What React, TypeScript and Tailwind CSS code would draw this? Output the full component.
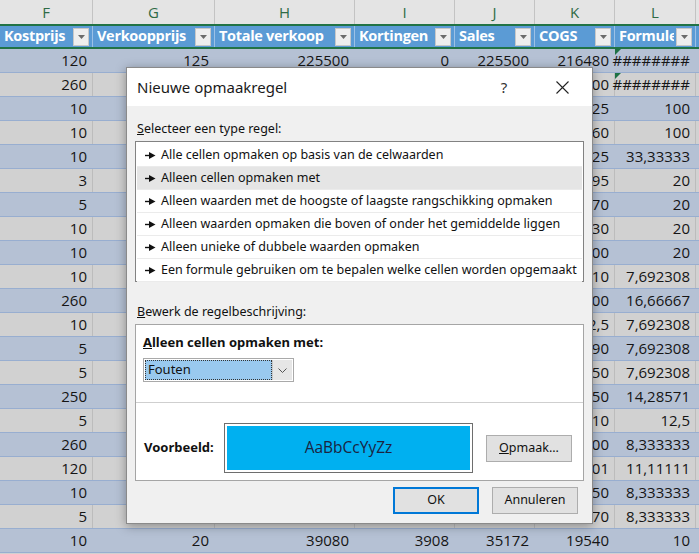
import React from "react";

const COLS = [
	{ letter: "F", title: "Kostprijs", w: 93 },
	{ letter: "G", title: "Verkoopprijs", w: 122 },
	{ letter: "H", title: "Totale verkoop", w: 140 },
	{ letter: "I", title: "Kortingen", w: 100 },
	{ letter: "J", title: "Sales", w: 80 },
	{ letter: "K", title: "COGS", w: 80 },
	{ letter: "L", title: "Formule", w: 81 },
];

// F, G, H, I, J, K, L
const ROWS: string[][] = [
	["120", "125", "225500", "0", "225500", "216480", "########"],
	["260", "1800", "468000", "0", "468000", "449400", "########"],
	["10", "15", "1500", "0", "1500", "1125", "100"],
	["10", "20", "2000", "0", "2000", "1160", "100"],
	["10", "15", "3300", "0", "3300", "7425", "33,33333"],
	["3", "15", "8595", "0", "8595", "8595", "20"],
	["5", "15", "1470", "0", "1470", "1470", "20"],
	["10", "15", "930", "0", "930", "930", "20"],
	["10", "15", "2500", "0", "2500", "2500", "20"],
	["10", "15", "4210", "0", "4210", "4210", "7,692308"],
	["260", "350", "98800", "0", "98800", "98800", "16,66667"],
	["10", "15", "1402,5", "0", "1402,5", "1402,5", "7,692308"],
	["5", "15", "3690", "0", "3690", "3690", "7,692308"],
	["5", "15", "1150", "0", "1150", "1150", "7,692308"],
	["250", "300", "71250", "0", "71250", "71250", "14,28571"],
	["5", "15", "510", "0", "510", "510", "12,5"],
	["260", "350", "83200", "0", "83200", "83200", "8,333333"],
	["120", "125", "35101", "0", "35101", "35101", "11,11111"],
	["10", "15", "2750", "0", "2750", "2750", "8,333333"],
	["5", "15", "1470", "0", "1470", "1470", "8,333333"],
	["10", "20", "39080", "3908", "35172", "19540", "10"],
];

const RULE_TYPES = [
	"Alle cellen opmaken op basis van de celwaarden",
	"Alleen cellen opmaken met",
	"Alleen waarden met de hoogste of laagste rangschikking opmaken",
	"Alleen waarden opmaken die boven of onder het gemiddelde liggen",
	"Alleen unieke of dubbele waarden opmaken",
	"Een formule gebruiken om te bepalen welke cellen worden opgemaakt",
];

const FilterButton: React.FC = () => (
	<div className="w-[16px] h-[18px] shrink-0 bg-[#eeeeee] border border-[#c8c8c8] flex items-center justify-center">
		<svg width="7" height="4" viewBox="0 0 7 4">
			<path d="M0 0 L7 0 L3.5 4 Z" fill="#6b6b6b" />
		</svg>
	</div>
);

const RuleArrow: React.FC = () => (
	<svg width="11" height="7" viewBox="0 0 11 7" className="shrink-0">
		<path d="M0 3.5 H5" stroke="#111" strokeWidth="1.4" />
		<path d="M4 0 L10.5 3.5 L4 7 Z" fill="#111" />
	</svg>
);

const Sheet: React.FC = () => (
	<div className="flex flex-col font-['Open_Sans',sans-serif]">
		{/* column letters */}
		<div className="flex h-[24px] bg-[#e4e4e4]">
			{COLS.map((c) => (
				<div
					key={c.letter}
					style={{ width: c.w }}
					className="shrink-0 border-r border-[#c3c3c3] flex items-center justify-center text-[15px] text-[#2e6b46]"
				>
					{c.letter}
				</div>
			))}
			<div className="flex-1" />
		</div>

		{/* table header row */}
		<div className="flex h-[25px] bg-[#5b9bd5] border-y-2 border-[#217346]">
			{COLS.map((c) => (
				<div
					key={c.title}
					style={{ width: c.w }}
					className="shrink-0 flex items-center pl-[4px] pr-[3px] gap-[2px] border-r border-[#9cc1e6]"
				>
					<div className="flex-1 overflow-hidden whitespace-nowrap text-[14.5px] tracking-[-0.3px] font-bold text-white leading-none">
						{c.title}
					</div>
					<FilterButton />
				</div>
			))}
			<div className="flex-1" />
		</div>

		{/* data rows */}
		{ROWS.map((row, r) => (
			<div
				key={r}
				className={`flex h-[24px] border-b border-[#98aed0] ${r % 2 === 0 ? "bg-[#b5c1d4]" : "bg-[#d1d1d1]"}`}
			>
				{row.map((v, i) => (
					<div
						key={i}
						style={{ width: COLS[i].w }}
						className={`relative shrink-0 flex items-center justify-end pr-[5px] text-[15px] text-[#151515] border-r ${r % 2 === 0 ? "border-[#b5c1d4]" : "border-[#bcbcbc]"}`}
					>
						{i === 6 && r < 2 && (
							<div className="absolute left-0 top-0 w-0 h-0 border-t-[6px] border-r-[6px] border-t-[#1e7145] border-r-transparent" />
						)}
						{v}
					</div>
				))}
				<div className="flex-1" />
			</div>
		))}
	</div>
);

const Dialog: React.FC = () => (
	<div className="absolute left-[126px] top-[67px] w-[467px] h-[457px] flex flex-col bg-[#f0f0f0] border border-[#8a8a8a] shadow-[0_2px_10px_rgba(0,0,0,0.35)] font-['Noto_Sans',sans-serif] text-[12.5px] text-[#111]">
		{/* title bar */}
		<div className="h-[38px] shrink-0 bg-white flex items-center pl-[10px]">
			<div className="flex-1 text-[15px] text-[#1a1a1a]">Nieuwe opmaakregel</div>
			<div className="w-[56px] text-center text-[15px] text-[#333]">?</div>
			<div className="w-[60px] flex justify-center">
				<svg width="13" height="13" viewBox="0 0 13 13">
					<path d="M0.5 0.5 L12.5 12.5 M12.5 0.5 L0.5 12.5" stroke="#222" strokeWidth="1.1" />
				</svg>
			</div>
		</div>

		<div className="flex flex-col px-[8px] pt-[14px]">
			<div className="h-[18px] pl-[2px] leading-[18px]">
				<span className="underline">S</span>electeer een type regel:
			</div>

			{/* rule type list */}
			<div className="mt-[3px] h-[141px] bg-white border border-[#828282] px-[1px] pt-[2px]">
				{RULE_TYPES.map((t, i) => (
					<div
						key={t}
						className={`h-[23px] flex items-center gap-[5px] pl-[8px] whitespace-nowrap border-b border-[#ebebeb] ${i === 1 ? "bg-[#e5e5e5]" : ""}`}
					>
						<RuleArrow />
						<span>{t}</span>
					</div>
				))}
			</div>

			<div className="mt-[21px] h-[18px] pl-[2px] leading-[18px]">
				<span className="underline">B</span>ewerk de regelbeschrijving:
			</div>

			{/* rule description */}
			<div className="mt-[3px] h-[157px] bg-white border border-[#a5a5a5] flex flex-col">
				<div className="flex flex-col px-[7px] pt-[8px]">
					<div className="h-[18px] leading-[18px] font-bold text-[13px]">
						<span className="underline">A</span>lleen cellen opmaken met:
					</div>
					<div className="mt-[7px] w-[151px] h-[24px] flex border border-[#a9a9a9] bg-white p-[1px]">
						<div className="flex-1 bg-[#99c9ef] border border-dotted border-[#333] flex items-center pl-[2px] text-[13px]">
							Fouten
						</div>
						<div className="w-[20px] bg-[#e6e6e6] border-l border-[#c9c9c9] flex items-center justify-center">
							<svg width="9" height="5" viewBox="0 0 9 5">
								<path d="M0.5 0.5 L4.5 4.5 L8.5 0.5" stroke="#555" strokeWidth="1" fill="none" />
							</svg>
						</div>
					</div>
				</div>

				<div className="mt-[20px] border-t border-[#cfcfcf]" />

				<div className="flex items-center pt-[20px] pl-[8px]">
					<div className="w-[80px] font-bold text-[13px]">Voorbeeld:</div>
					<div className="w-[249px] h-[50px] border border-[#6e6e6e] p-[2px]">
						<div className="w-full h-full bg-[#00b0f0] flex items-center justify-center font-['Open_Sans',sans-serif] text-[15.5px] text-[#1b2340]">
							AaBbCcYyZz
						</div>
					</div>
					<div className="ml-[13px] w-[86px] h-[27px] bg-[#e1e1e1] border border-[#adadad] flex items-center justify-center">
						<span className="underline">O</span>pmaak...
					</div>
				</div>
			</div>

			{/* dialog buttons */}
			<div className="mt-[6px] flex justify-end gap-[13px] pr-[6px]">
				<div className="w-[86px] h-[27px] bg-[#e1e1e1] border-2 border-[#0078d7] flex items-center justify-center">
					OK
				</div>
				<div className="w-[86px] h-[27px] bg-[#e1e1e1] border border-[#adadad] flex items-center justify-center">
					Annuleren
				</div>
			</div>
		</div>
	</div>
);

export default function App() {
	return (
		<div className="relative w-[699px] h-[554px] overflow-hidden bg-[#d1d1d1]">
			<Sheet />
			<Dialog />
		</div>
	);
}
